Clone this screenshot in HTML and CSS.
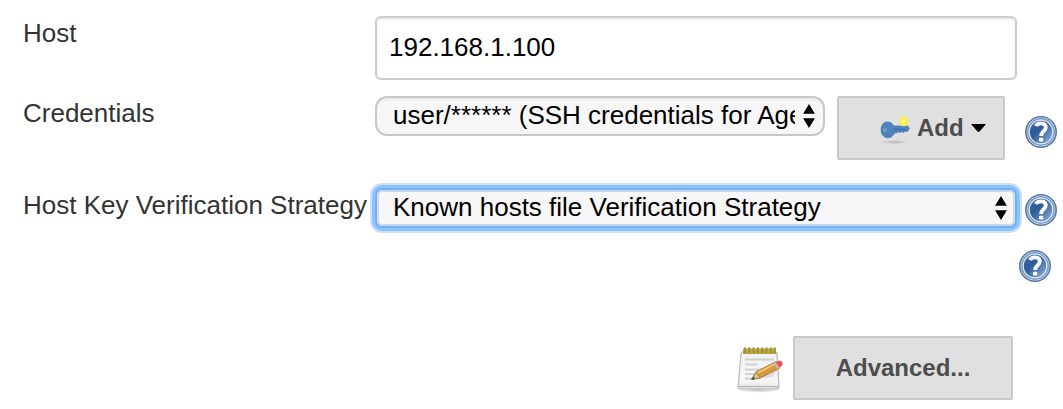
FILE: index.html
```html
<!DOCTYPE html>
<html lang="en">
<head>
<meta charset="utf-8">
<title>Agent configuration</title>
<link rel="stylesheet" href="styles.css">
</head>
<body>
<svg width="0" height="0" class="defs" aria-hidden="true">
  <defs>
    <linearGradient id="helpFill" x1="0" y1="0" x2="1" y2="1">
      <stop offset="0" stop-color="#3e6aa4"/><stop offset=".4" stop-color="#2f5c98"/><stop offset="1" stop-color="#8fb2da"/>
    </linearGradient>
    <linearGradient id="paper" x1="0" y1="0" x2="0" y2="1">
      <stop offset="0" stop-color="#f1f1f1"/><stop offset=".8" stop-color="#f7f7f7"/><stop offset="1" stop-color="#dcdcdc"/>
    </linearGradient>
    <radialGradient id="glow"><stop offset="0" stop-color="#fffc9a"/><stop offset=".5" stop-color="#fbf04c"/><stop offset=".8" stop-color="#f6ec6a" stop-opacity=".75"/><stop offset="1" stop-color="#f3ec90" stop-opacity="0"/></radialGradient>
    <radialGradient id="shade"><stop offset="0" stop-color="#777" stop-opacity=".45"/><stop offset="1" stop-color="#777" stop-opacity="0"/></radialGradient>
    <symbol id="help" viewBox="0 0 32 32">
      <circle cx="16" cy="16" r="15.2" fill="#e3ebf5" stroke="#5377a8" stroke-width="1.6"/>
      <circle cx="16" cy="16" r="13.2" fill="none" stroke="#7c9bc4" stroke-width="1.5"/>
      <circle cx="16" cy="16" r="11.2" fill="url(#helpFill)"/>
      <path d="M10.8 10C12.6 6.5 20.8 6.2 20.8 11.4C20.8 15.2 16.1 15.2 16.1 20" fill="none" stroke="#fff" stroke-width="3.8"/>
      <rect x="14" y="21.7" width="4.2" height="3.8" rx=".8" fill="#fff"/>
    </symbol>
    <symbol id="updown" viewBox="0 0 12 24">
      <path d="M6 0L11.9 9.8H.1ZM6 24L11.9 14.2H.1Z" fill="#000"/>
    </symbol>
  </defs>
</svg>
<form class="form">
  <div class="row row-host">
    <label class="label" for="host">Host</label>
    <input class="input" id="host" type="text" value="192.168.1.100">
  </div>
  <div class="row row-cred">
    <label class="label" for="cred">Credentials</label>
    <div class="picker picker-cred">
      <select class="select" id="cred"><option>user/****** (SSH credentials for Agents)</option></select>
      <svg class="arrows"><use href="#updown"/></svg>
    </div>
    <button class="button add" type="button">
      <svg class="key" viewBox="0 0 32 32">
        <ellipse cx="15.5" cy="30" rx="14" ry="2" fill="url(#shade)"/>
        <path fill-rule="evenodd" d="M8.3 10C11.5 10 13.6 11.6 14.6 14H28.8L30.4 16.5L28.6 19.3H26L24.8 20.4L23 19.6L21.4 20.5L19.5 19.7L18 20.8L15.4 21C14.3 24 11.5 25.8 8.7 25.7C4.5 25.5 2 22 2.1 17.8C2.2 13.2 4.6 10 8.3 10ZM6 16C5 16 4.3 16.8 4.3 18C4.3 19.3 5 20.2 6 20.2C7 20.2 7.8 19.3 7.8 18C7.8 16.8 7 16 6 16Z" fill="#4f83bf" stroke="#4679b4" stroke-width=".8"/>
        <path d="M5.8 15.6C4.8 15.6 4 16.6 4 18C4 19.4 4.8 20.5 5.8 20.5C7 20.5 7.8 19.4 7.8 18C7.8 16.6 7 15.6 5.8 15.6Z" fill="#7996b5"/>
        <path d="M14 17.5H27" stroke="#3f72ac" stroke-width="1.3"/>
        <circle cx="24.7" cy="9.3" r="5.8" fill="url(#glow)"/>
      </svg>
      <span>Add</span>
      <svg class="caret" viewBox="0 0 15 8"><path d="M0 0H15L8.8 7.2Q7.5 8.4 6.2 7.2Z" fill="#000"/></svg>
    </button>
    <svg class="help"><use href="#help"/></svg>
  </div>
  <div class="row row-key">
    <label class="label" for="strategy">Host Key Verification Strategy</label>
    <div class="picker picker-key">
      <select class="select focused" id="strategy"><option>Known hosts file Verification Strategy</option></select>
      <svg class="arrows"><use href="#updown"/></svg>
    </div>
    <svg class="help"><use href="#help"/></svg>
  </div>
  <div class="row row-help"><svg class="help"><use href="#help"/></svg></div>
  <div class="row row-advanced">
    <svg class="notepad" viewBox="0 0 48 48">
      <ellipse cx="23" cy="44" rx="22" ry="2.8" fill="url(#shade)"/>
      <path d="M5 8Q5 5.5 7.5 5.5H38.5Q41 5.5 41 8L43 40.5Q43 43 40.5 43H4.5Q2 43 2.2 40.5Z" fill="url(#paper)" stroke="#b8b8b8" stroke-width="1.2"/>
      <path d="M2.6 40.5H42.6" stroke="#b5b5b5" stroke-width="1.2"/>
      <path d="M7 2.5H40V8H7Z" fill="#b9ab50"/>
      <path d="M9 1.5V7.5M13.3 1.5V7.5M17.6 1.5V7.5M21.9 1.5V7.5M26.2 1.5V7.5M30.5 1.5V7.5M34.8 1.5V7.5M38.6 1.5V7.5" stroke="#a0922f" stroke-width="2.2"/>
      <path d="M9 13.5H38M9 18.5H22M9 23.5H31M9 28H19M9 32.5H17" stroke="#d0d0d0" stroke-width="1.8"/>
      <path d="M17 33.5L36 31L43 22.5L36 25Z" fill="#777" opacity=".2"/>
      <path d="M15.5 33.5L20.3 25.7L40 15.6L44 21.8L24 32Z" fill="#d69a40" stroke="#a5722b" stroke-width=".9"/>
      <path d="M21.5 27L39.5 17.6" stroke="#f0c670" stroke-width="2"/>
      <path d="M15.5 33.5L20.3 25.7L24 32Z" fill="#d8bd87" stroke="#96743b" stroke-width=".7"/>
      <path d="M15.5 33.5L17.3 30.5L19 32.9Z" fill="#444"/>
      <path d="M37.2 17L40 15.6L44 21.8L41 23.2Z" fill="#c7b9a0"/>
      <path d="M39.5 16L43 14.7Q46 14.6 46.6 17Q47 19.6 43.7 21.5Z" fill="#e8505c"/>
    </svg>
    <button class="button advanced" type="button">Advanced...</button>
  </div>
</form>
</body>
</html>
```
FILE: styles.css
```css
* { box-sizing: border-box; }
body {
  margin: 0;
  background: #fff;
  color: #333;
  font: 26px/30px "Liberation Sans", Helvetica, Arial, sans-serif;
}
.defs { display: block; height: 0; }
svg { flex: none; }
.form {
  width: 1063px;
  height: 409px;
  overflow: hidden;
  padding: 16px 6px 0 23px;
}
.row { display: flex; align-items: flex-start; }
.label { width: 352px; flex: none; padding-top: 2px; white-space: nowrap; }
.row-host { height: 80px; }
.row-cred { height: 92px; }
.row-cred .help { margin: 20px 0 0 20px; }
.row-key { height: 62px; }
.row-key .help { margin: 6px 0 0 8px; }
.row-help { height: 86px; justify-content: flex-end; padding-right: 6px; }
.row-advanced { justify-content: flex-end; padding-right: 44px; }
.input {
  width: 642px;
  height: 64px;
  margin: 0;
  padding: 0 12px 2px;
  border: 2px solid #ccc;
  border-radius: 6px;
  outline: 0;
  background: #fff;
  box-shadow: inset 0 2px 2px rgba(0, 0, 0, .075);
  color: #000;
  font: inherit;
}
.picker { display: grid; height: 40px; flex: none; }
.picker > * { grid-area: 1 / 1; }
.picker-cred { width: 450px; }
.picker-key { width: 642px; }
.select {
  appearance: none;
  width: 100%;
  height: 40px;
  margin: 0;
  padding: 0 28px 2px 16px;
  border: 2px solid #c8c8c8;
  border-radius: 12px;
  outline: 0;
  background: #f7f7f7;
  box-shadow: inset 0 2px 2px rgba(0, 0, 0, .06);
  color: #000;
  font: inherit;
}
.focused {
  border-color: #79b1ef;
  border-radius: 7px;
  box-shadow: 0 0 0 3px #8cc3ff, 0 0 0 5px #c8e3ff, inset 0 0 0 2px #c5dbf4;
}
.arrows {
  width: 12px;
  height: 24px;
  justify-self: end;
  align-self: center;
  margin-right: 10px;
  pointer-events: none;
}
.help { width: 32px; height: 32px; }
.button {
  display: flex;
  align-items: center;
  height: 64px;
  margin: 0;
  border: 2px solid #c9c9c9;
  border-radius: 2px;
  background: #e0e0e0;
  color: #4d4d4d;
  font: bold 24px/28px "Liberation Sans", Helvetica, Arial, sans-serif;
}
.add { width: 168px; margin-left: 12px; padding: 0 0 0 40px; }
.key { width: 32px; height: 32px; margin-right: 6px; }
.caret { width: 15px; height: 8px; margin-left: 7px; }
.advanced { width: 220px; justify-content: center; padding: 0; }
.notepad { width: 48px; height: 48px; margin: 10px 9px 0 0; }
```
